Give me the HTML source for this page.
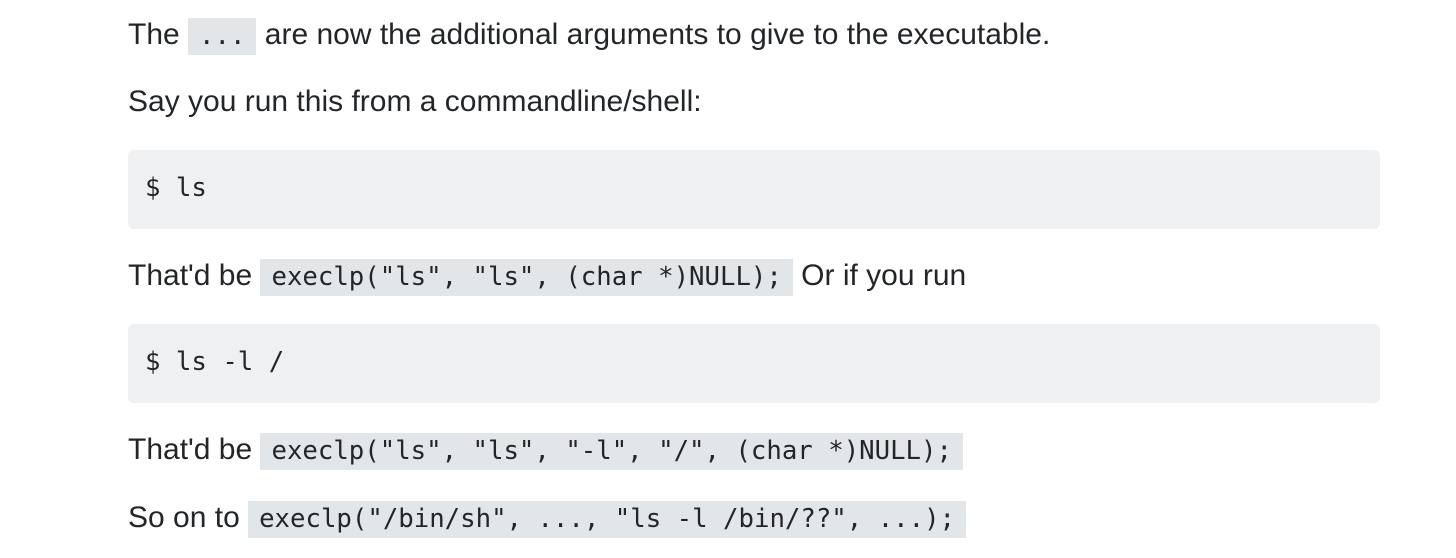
<!DOCTYPE html>
<html><head><meta charset="utf-8"><style>
html,body{margin:0;padding:0;background:#fff;width:1456px;height:558px;overflow:hidden}
.l{position:absolute;left:128px;font-family:"Liberation Sans",Arial,sans-serif;font-size:30px;line-height:34px;color:#232629;white-space:nowrap}
code{font-family:"DejaVu Sans Mono",monospace;font-size:25.7px;background:#e3e6e8;padding:3px 11px 4px 11px;color:#232629}
.pre{position:absolute;left:128px;width:1252px;height:79px;background:#eff0f1;border-radius:6px}
.pre span{position:absolute;left:17px;top:21px;font-family:"DejaVu Sans Mono",monospace;font-size:25.7px;line-height:34px;color:#232629;white-space:pre}
</style></head><body>
<div class="l" style="top:18px">The <code>...</code> are now the additional arguments to give to the executable.</div>
<div class="l" style="top:85px">Say you run this from a commandline/shell:</div>
<div class="pre" style="top:150px"><span>$ ls</span></div>
<div class="l" style="top:259px">That'd be <code>execlp("ls", "ls", (char *)NULL);</code> Or if you run</div>
<div class="pre" style="top:324px"><span>$ ls -l /</span></div>
<div class="l" style="top:433px">That'd be <code>execlp("ls", "ls", "-l", "/", (char *)NULL);</code></div>
<div class="l" style="top:501px">So on to <code>execlp("/bin/sh", ..., "ls -l /bin/??", ...);</code></div>
</body></html>
